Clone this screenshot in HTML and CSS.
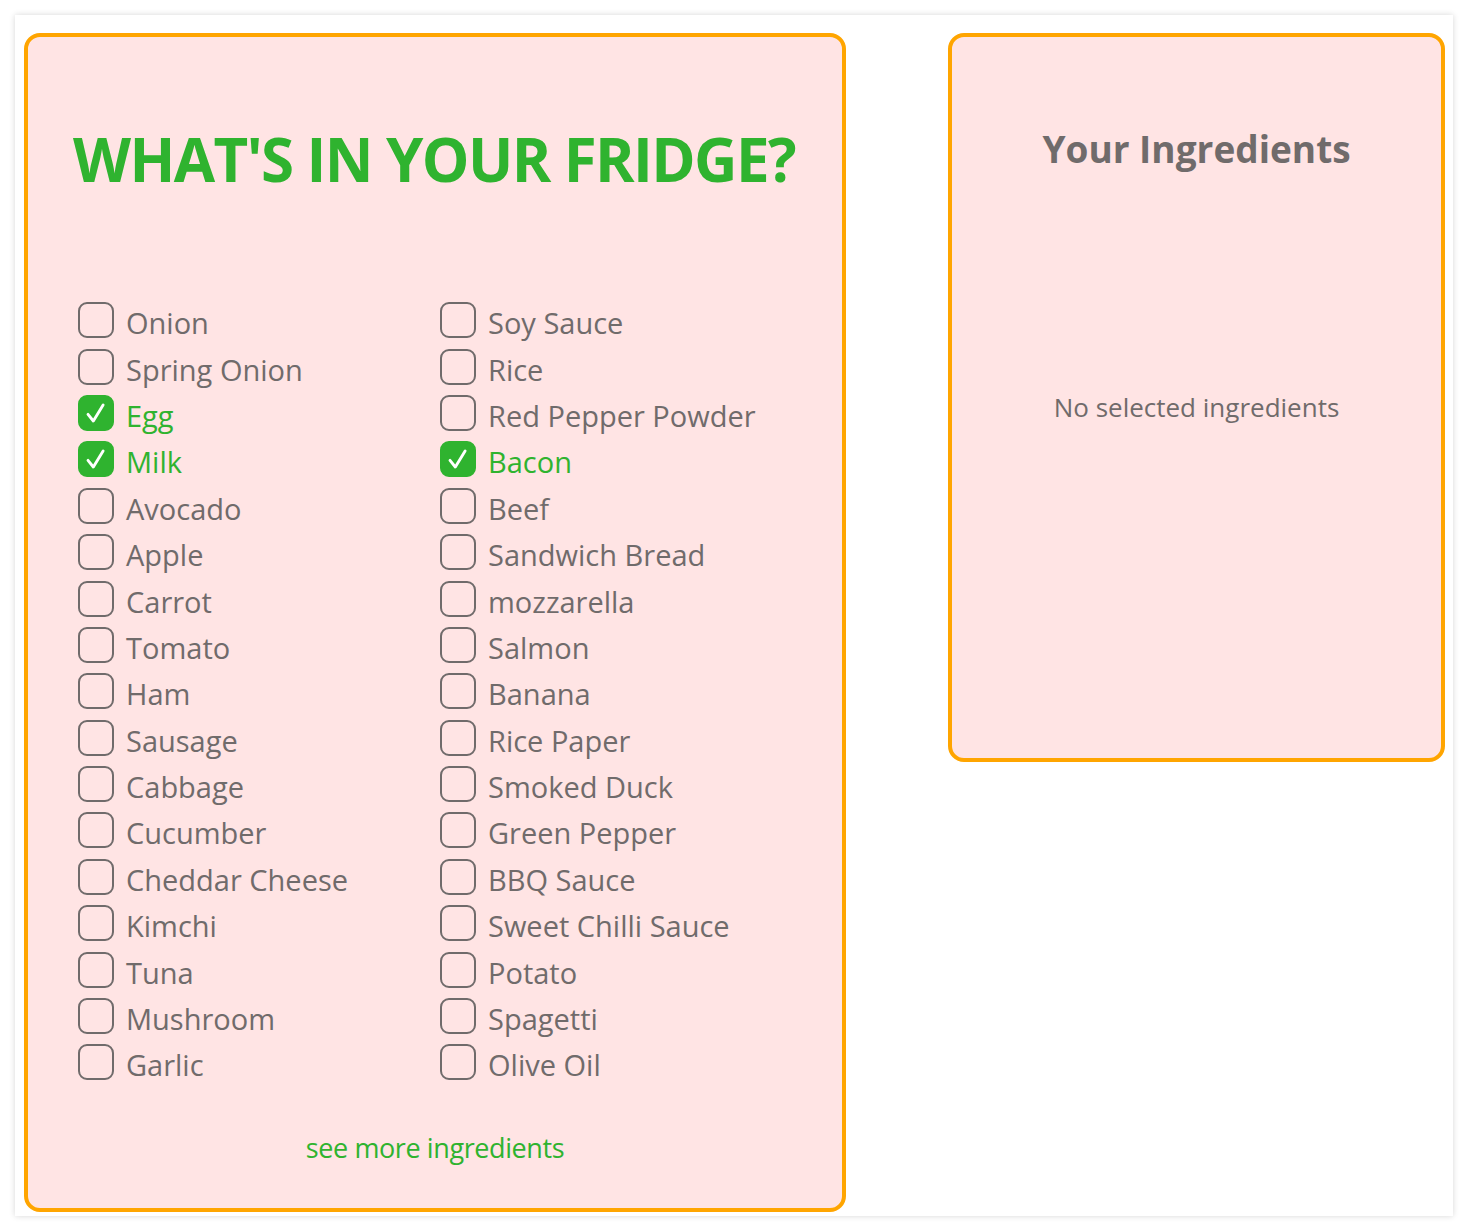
FILE: index.html
```html
<!DOCTYPE html>
<html lang="en">
<head>
<meta charset="utf-8">
<title>What's in your fridge?</title>
<link rel="stylesheet" href="styles.css">
</head>
<body>
<div class="card">
  <section class="fridge">
    <h1 class="fridge-title">WHAT'S IN YOUR FRIDGE?</h1>
    <ul class="ing-grid">
      <li class="ing"><span class="box"></span><span class="name">Onion</span></li>
      <li class="ing"><span class="box"></span><span class="name">Soy Sauce</span></li>
      <li class="ing"><span class="box"></span><span class="name">Spring Onion</span></li>
      <li class="ing"><span class="box"></span><span class="name">Rice</span></li>
      <li class="ing checked"><span class="box"><svg viewBox="0 0 36 36"><path d="M9 19.5 L15 27 L26 9" /></svg></span><span class="name">Egg</span></li>
      <li class="ing"><span class="box"></span><span class="name">Red Pepper Powder</span></li>
      <li class="ing checked"><span class="box"><svg viewBox="0 0 36 36"><path d="M9 19.5 L15 27 L26 9" /></svg></span><span class="name">Milk</span></li>
      <li class="ing checked"><span class="box"><svg viewBox="0 0 36 36"><path d="M9 19.5 L15 27 L26 9" /></svg></span><span class="name">Bacon</span></li>
      <li class="ing"><span class="box"></span><span class="name">Avocado</span></li>
      <li class="ing"><span class="box"></span><span class="name">Beef</span></li>
      <li class="ing"><span class="box"></span><span class="name">Apple</span></li>
      <li class="ing"><span class="box"></span><span class="name">Sandwich Bread</span></li>
      <li class="ing"><span class="box"></span><span class="name">Carrot</span></li>
      <li class="ing"><span class="box"></span><span class="name">mozzarella</span></li>
      <li class="ing"><span class="box"></span><span class="name">Tomato</span></li>
      <li class="ing"><span class="box"></span><span class="name">Salmon</span></li>
      <li class="ing"><span class="box"></span><span class="name">Ham</span></li>
      <li class="ing"><span class="box"></span><span class="name">Banana</span></li>
      <li class="ing"><span class="box"></span><span class="name">Sausage</span></li>
      <li class="ing"><span class="box"></span><span class="name">Rice Paper</span></li>
      <li class="ing"><span class="box"></span><span class="name">Cabbage</span></li>
      <li class="ing"><span class="box"></span><span class="name">Smoked Duck</span></li>
      <li class="ing"><span class="box"></span><span class="name">Cucumber</span></li>
      <li class="ing"><span class="box"></span><span class="name">Green Pepper</span></li>
      <li class="ing"><span class="box"></span><span class="name">Cheddar Cheese</span></li>
      <li class="ing"><span class="box"></span><span class="name">BBQ Sauce</span></li>
      <li class="ing"><span class="box"></span><span class="name">Kimchi</span></li>
      <li class="ing"><span class="box"></span><span class="name">Sweet Chilli Sauce</span></li>
      <li class="ing"><span class="box"></span><span class="name">Tuna</span></li>
      <li class="ing"><span class="box"></span><span class="name">Potato</span></li>
      <li class="ing"><span class="box"></span><span class="name">Mushroom</span></li>
      <li class="ing"><span class="box"></span><span class="name">Spagetti</span></li>
      <li class="ing"><span class="box"></span><span class="name">Garlic</span></li>
      <li class="ing"><span class="box"></span><span class="name">Olive Oil</span></li>
    </ul>
    <a class="see-more" href="#">see more ingredients</a>
  </section>
  <aside class="mine">
    <h2 class="mine-title">Your Ingredients</h2>
    <p class="mine-empty">No selected ingredients</p>
  </aside>
</div>
</body>
</html>
```

FILE: styles.css
```css
* { box-sizing: border-box; }
html, body { margin: 0; padding: 0; background: #ffffff; }
body {
  font-family: "Open Sans", "Noto Sans", sans-serif;
  color: #706b6b;
  padding: 15px;
}
.card {
  width: 1438px;
  height: 1201px;
  background: #fff;
  box-shadow: 0 0 6px rgba(0, 0, 0, 0.16);
  display: flex;
  align-items: flex-start;
  gap: 102px;
  padding: 18px 8px 3px 9px;
}
.fridge, .mine {
  background: #ffe4e4;
  border: 4px solid #ffa500;
  border-radius: 16px;
}
.fridge {
  width: 822px;
  height: 1179px;
  padding: 0 0 0 50px;
  display: flex;
  flex-direction: column;
}
.fridge-title {
  margin: 78px 0 0 -5px;
  font-size: 60px;
  line-height: 88px;
  font-weight: 700;
  color: #2fb32f;
  letter-spacing: -1.6px;
  white-space: nowrap;
}
.ing-grid {
  list-style: none;
  margin: 94px 0 0 0;
  padding: 0;
  display: grid;
  grid-template-columns: 362px 362px;
  grid-auto-rows: 46.4px;
}
.ing {
  display: flex;
  align-items: center;
  gap: 12px;
}
.box {
  width: 36px;
  height: 36px;
  border: 2px solid #706b6b;
  border-radius: 9px;
  flex: none;
  display: flex;
  align-items: center;
  justify-content: center;
}
.box svg { width: 36px; height: 36px; }
.box path { fill: none; stroke: #fff; stroke-width: 3.2; stroke-linecap: round; stroke-linejoin: round; }
.ing.checked .box { background: #2fb32f; border-color: #2fb32f; }
.name {
  font-size: 29px;
  line-height: 40px;
  position: relative;
  top: 3px;
}
.ing.checked .name { color: #2fb32f; }
.see-more {
  margin: 43px 0 0 -50px;
  text-align: center;
  font-size: 27px;
  color: #2fb32f;
  text-decoration: none;
  letter-spacing: -0.4px;
}
.mine {
  width: 497px;
  height: 729px;
  text-align: center;
}
.mine-title {
  margin: 86px 0 0 0;
  font-size: 37px;
  line-height: 52px;
  font-weight: 700;
}
.mine-empty {
  margin: 214px 0 0 0;
  font-size: 26px;
  line-height: 36px;
}
```
